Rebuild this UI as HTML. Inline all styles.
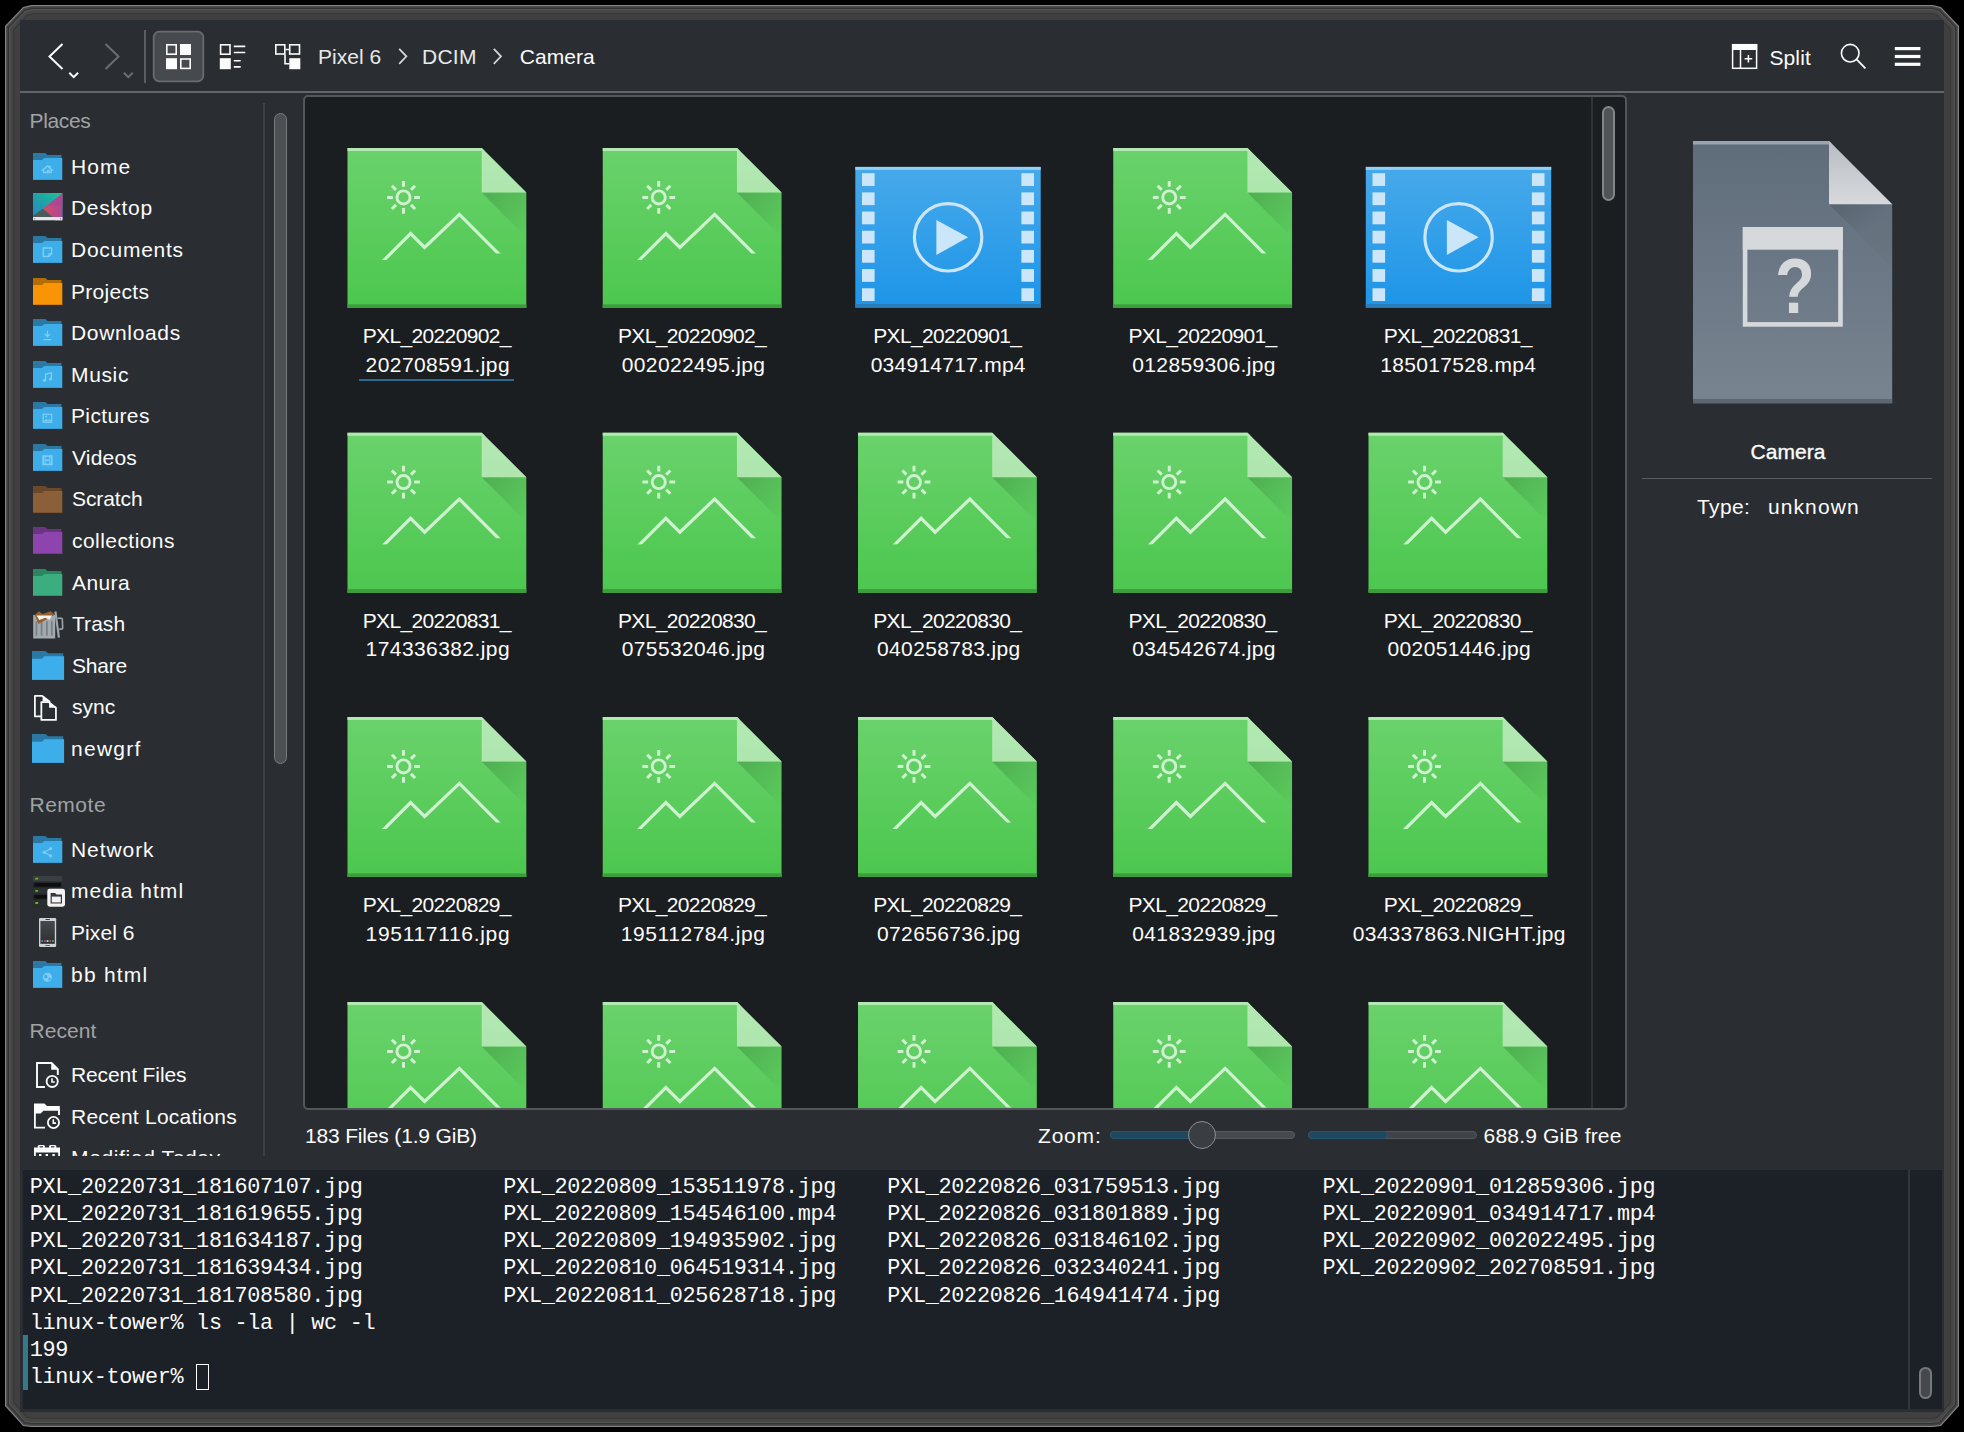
<!DOCTYPE html>
<html lang="en"><head><meta charset="utf-8"><title>Camera — Dolphin</title>
<style>
html,body{margin:0;padding:0;background:#000;}
body{width:1964px;height:1432px;position:relative;overflow:hidden;font-family:"Liberation Sans",sans-serif;}
.t{position:absolute;white-space:pre;font-family:"Liberation Sans",sans-serif;}
.i{position:absolute;display:block;overflow:visible}
.abs{position:absolute}
#shadow{position:absolute;left:0;top:0;width:1964px;height:1432px;}
#win{position:absolute;left:20px;top:20px;width:1924px;height:1392px;background:#2a2e32;}
#tbline{position:absolute;left:20px;top:91px;width:1924px;height:2px;background:#62666a;}
#view{position:absolute;left:303px;top:95px;width:1319.5px;height:1011px;border:2px solid #54575a;border-radius:5px;background:#1b1e20;overflow:hidden;}
#term{position:absolute;left:23px;top:1170px;width:1919px;height:239px;background:#1c2027;overflow:hidden;}
.sb{position:absolute;box-sizing:border-box;border-radius:7px;}
pre{margin:0}
</style></head><body>
<svg id="shadow" width="1964" height="1432" viewBox="0 0 1964 1432"><polygon points="5.0,26.0 23.1,7.1 31.2,5.0 1932.8,5.0 1940.9,7.1 1959.0,26.0 1959.0,1406.0 1940.9,1426.0 1932.8,1427.0 31.2,1427.0 23.1,1426.0 5.0,1406.0" fill="#868686"/><polygon points="6.1,26.5 23.6,8.1 31.5,6.1 1932.5,6.1 1940.4,8.1 1957.9,26.5 1957.9,1405.5 1940.4,1424.9 1932.5,1425.9 31.5,1425.9 23.6,1424.9 6.1,1405.5" fill="#4b4b4b"/><polygon points="7.1,26.9 24.1,9.1 31.8,7.1 1932.2,7.1 1939.9,9.1 1956.9,26.9 1956.9,1405.1 1939.9,1423.9 1932.2,1424.9 31.8,1424.9 24.1,1423.9 7.1,1405.1" fill="#424242"/><polygon points="8.0,27.2 24.5,9.9 32.1,8.0 1931.9,8.0 1939.5,9.9 1956.0,27.2 1956.0,1404.8 1939.5,1423.0 1931.9,1424.0 32.1,1424.0 24.5,1423.0 8.0,1404.8" fill="#333333"/><polygon points="9.1,27.7 25.1,11.0 32.3,9.1 1931.7,9.1 1938.9,11.0 1954.9,27.7 1954.9,1404.3 1938.9,1422.0 1931.7,1422.9 32.3,1422.9 25.1,1422.0 9.1,1404.3" fill="#565656"/><polygon points="10.1,28.1 25.6,11.9 32.6,10.1 1931.4,10.1 1938.4,11.9 1953.9,28.1 1953.9,1403.9 1938.4,1421.0 1931.4,1421.9 32.6,1421.9 25.6,1421.0 10.1,1403.9" fill="#464646"/><polygon points="12.9,29.3 27.0,14.5 33.4,12.9 1930.6,12.9 1937.0,14.5 1951.1,29.3 1951.1,1402.7 1937.0,1418.3 1930.6,1419.1 33.4,1419.1 27.0,1418.3 12.9,1402.7" fill="#383838"/><polygon points="14.1,29.8 27.6,15.7 33.7,14.1 1930.3,14.1 1936.4,15.7 1949.9,29.8 1949.9,1402.2 1936.4,1417.1 1930.3,1417.9 33.7,1417.9 27.6,1417.1 14.1,1402.2" fill="#404040"/></svg>
<div id="win"></div>
<div id="tbline"></div>
<svg class="i" style="left:0;top:0" width="1964" height="95" viewBox="0 0 1964 95"><path d="M62.5 44L49.5 56.5L62.5 69" fill="none" stroke="#fcfcfc" stroke-width="2"/><path d="M69.3 72.8L73.7 77.2L78.1 72.8" fill="none" stroke="#fcfcfc" stroke-width="2"/><path d="M105.5 44L118.5 56.5L105.5 69" fill="none" stroke="#6b6e71" stroke-width="2"/><path d="M123.9 72.8L128.3 77.2L132.7 72.8" fill="none" stroke="#6b6e71" stroke-width="2"/><rect x="144" y="30" width="2" height="53" fill="#5b5e61"/><rect x="153.7" y="31.7" width="49.6" height="49.6" rx="5.5" fill="#46494d" stroke="#696c6f" stroke-width="1.8"/><rect x="166.8" y="44.8" width="9.4" height="9.4" fill="none" stroke="#fcfcfc" stroke-width="1.6"/><rect x="180" y="44" width="11" height="11" fill="#fcfcfc"/><rect x="166" y="58.2" width="11" height="11" fill="#fcfcfc"/><rect x="180.8" y="59" width="9.4" height="9.4" fill="none" stroke="#fcfcfc" stroke-width="1.6"/><rect x="220.6" y="44.8" width="9.4" height="9.4" fill="none" stroke="#fcfcfc" stroke-width="1.6"/><rect x="219.8" y="58.2" width="11" height="11" fill="#fcfcfc"/><path d="M233.8 46.4H245.3M233.8 52.5H245.3M233.8 60.8H240.7M233.8 66.9H240.7" stroke="#fcfcfc" stroke-width="1.6"/><rect x="275.8" y="44.8" width="9" height="9.2" fill="none" stroke="#fcfcfc" stroke-width="1.6"/><rect x="289.7" y="44.8" width="9.8" height="9.2" fill="none" stroke="#fcfcfc" stroke-width="1.6"/><path d="M285.4 49.5H289.2M285 54.6V63.8H289.5" fill="none" stroke="#fcfcfc" stroke-width="1.6"/><rect x="289.3" y="58.2" width="11" height="11" fill="#fcfcfc"/><path d="M399.2 48.8L406.4 56.3L399.2 63.8" fill="none" stroke="#d8d9da" stroke-width="1.7"/><path d="M493.8 48.8L501 56.3L493.8 63.8" fill="none" stroke="#d8d9da" stroke-width="1.7"/><rect x="1732.6" y="44.7" width="24" height="23.6" fill="none" stroke="#fcfcfc" stroke-width="1.5"/><rect x="1732" y="44" width="25.2" height="6" fill="#fcfcfc"/><path d="M1740.5 50V68.6" stroke="#fcfcfc" stroke-width="1.5"/><path d="M1744.6 58.7H1752.2M1748.4 54.9V62.5" stroke="#fcfcfc" stroke-width="1.5"/><circle cx="1850.2" cy="53.2" r="8.8" fill="none" stroke="#fcfcfc" stroke-width="1.6"/><path d="M1856.6 59.4L1865.4 68.4" stroke="#fcfcfc" stroke-width="1.8"/><rect x="1894.8" y="47" width="25.6" height="3.2" fill="#fcfcfc"/><rect x="1894.8" y="54.9" width="25.6" height="3.2" fill="#fcfcfc"/><rect x="1894.8" y="62.7" width="25.6" height="3.2" fill="#fcfcfc"/></svg>
<div class="t" style="left:318.00px;top:42.22px;font-size:21.0px;line-height:29px;color:#e8e9e9;letter-spacing:0.041px;">Pixel 6</div>
<div class="t" style="left:422.00px;top:42.22px;font-size:21.0px;line-height:29px;color:#e8e9e9;letter-spacing:0.245px;">DCIM</div>
<div class="t" style="left:519.70px;top:42.22px;font-size:21.0px;line-height:29px;color:#fcfcfc;letter-spacing:0.058px;">Camera</div>
<div class="t" style="left:1769.40px;top:42.62px;font-size:21.0px;line-height:29px;color:#fcfcfc;letter-spacing:0.146px;">Split</div>
<div class="abs" style="left:263px;top:103px;width:1.5px;height:1053px;background:#3e4245"></div>
<div class="sb" style="left:274.1px;top:112.8px;width:13px;height:651.4px;background:#4c5053;border:1.7px solid #787b7e"></div>
<div class="abs" id="side" style="left:20px;top:93px;width:243px;height:1063px;overflow:hidden">
<div class="t" style="left:9.50px;top:13.32px;font-size:21.0px;line-height:29px;color:#a1a3a5;letter-spacing:-0.366px;">Places</div>
<div class="t" style="left:9.50px;top:696.82px;font-size:21.0px;line-height:29px;color:#a1a3a5;letter-spacing:0.510px;">Remote</div>
<div class="t" style="left:9.50px;top:922.82px;font-size:21.0px;line-height:29px;color:#a1a3a5;letter-spacing:0.039px;">Recent</div>
<div class="t" style="left:51.00px;top:58.82px;font-size:21.0px;line-height:29px;color:#fcfcfc;letter-spacing:1.021px;">Home</div>
<svg class="i" style="left:12.90px;top:60.00px" width="29.30" height="26.70" viewBox="0 0 29.30 26.70" ><g transform="scale(1.0000 0.9963)"><path d="M0 0H12.2L14.7 2H28.5V26H0Z" fill="#2a78a3"/><path d="M0 7.1H8.9L11.4 5H29.3V26.8H0Z" fill="#3daee9"/><rect x="0" y="26.1" width="29.3" height=".7" fill="#3aa6df"/><g transform="translate(14.45 16.3) scale(0.8) translate(-14.0 -13.45)"><path d="M9.3 17.6v-3.4l-1 .1 5.7-5 2 1.7v-1h1.2v2.1l2.5 2.2-1-.1v3.4h-2.6v-2.7h-2v2.7z" fill="none" stroke="#80cdf3" stroke-width="1.7"/></g></g></svg>
<div class="t" style="left:51.00px;top:100.42px;font-size:21.0px;line-height:29px;color:#fcfcfc;letter-spacing:0.674px;">Desktop</div>
<svg class="i" style="left:12.70px;top:100.40px" width="29.40" height="27.30" viewBox="0 0 29.40 27.30" ><defs><linearGradient id="dk1" x1="0" y1="1" x2="1" y2="0"><stop offset="0" stop-color="#2a84c6"/><stop offset=".5" stop-color="#1fa3a8"/><stop offset="1" stop-color="#19c596"/></linearGradient><linearGradient id="dk2" x1="0" y1="0" x2="1" y2="0"><stop offset="0" stop-color="#d84c62"/><stop offset="1" stop-color="#a9479a"/></linearGradient></defs><rect width="29.4" height="24.2" fill="url(#dk1)"/><path d="M29.4 0.5L9.9 15.7L20.1 24.2H29.4Z" fill="url(#dk2)"/><path d="M29.4 0.5L29.4 13L14 12.5Z" fill="#ab4791" opacity=".85"/><path d="M0 22.7L9.9 15.7L20.1 24.2H0Z" fill="#4b5a5b"/><rect y="24" width="29.4" height="3.3" fill="#e3e7e7"/><rect x="22" y="24" width="7.4" height="3.3" fill="#f1dfeb" opacity=".7"/><rect x="1.2" y="25.2" width="1.1" height="1.1" fill="#777"/><rect x="27" y="25.2" width="1.1" height="1.1" fill="#777"/></svg>
<div class="t" style="left:51.00px;top:141.92px;font-size:21.0px;line-height:29px;color:#fcfcfc;letter-spacing:0.736px;">Documents</div>
<svg class="i" style="left:12.90px;top:143.10px" width="29.30" height="26.70" viewBox="0 0 29.30 26.70" ><g transform="scale(1.0000 0.9963)"><path d="M0 0H12.2L14.7 2H28.5V26H0Z" fill="#2a78a3"/><path d="M0 7.1H8.9L11.4 5H29.3V26.8H0Z" fill="#3daee9"/><rect x="0" y="26.1" width="29.3" height=".7" fill="#3aa6df"/><g transform="translate(14.45 16.3) scale(1.1) translate(-14.4 -14.7)"><path d="M10.6 10.8h7.6v5.2l-2.6 2.6h-5z" fill="none" stroke="#80cdf3" stroke-width="1.3" stroke-linejoin="round"/><path d="M18 16.2h-2.4v2.4" fill="none" stroke="#80cdf3" stroke-width="1"/></g></g></svg>
<div class="t" style="left:51.00px;top:183.52px;font-size:21.0px;line-height:29px;color:#fcfcfc;letter-spacing:0.306px;">Projects</div>
<svg class="i" style="left:12.90px;top:184.70px" width="29.30" height="26.70" viewBox="0 0 29.30 26.70" ><g transform="scale(1.0000 0.9963)"><path d="M0 0H12.2L14.7 2H28.5V26H0Z" fill="#b56c04"/><path d="M0 7.1H8.9L11.4 5H29.3V26.8H0Z" fill="#f89406"/><rect x="0" y="26.1" width="29.3" height=".7" fill="#d98205"/></g></svg>
<div class="t" style="left:51.00px;top:225.12px;font-size:21.0px;line-height:29px;color:#fcfcfc;letter-spacing:0.663px;">Downloads</div>
<svg class="i" style="left:12.90px;top:226.30px" width="29.30" height="26.70" viewBox="0 0 29.30 26.70" ><g transform="scale(1.0000 0.9963)"><path d="M0 0H12.2L14.7 2H28.5V26H0Z" fill="#2a78a3"/><path d="M0 7.1H8.9L11.4 5H29.3V26.8H0Z" fill="#3daee9"/><rect x="0" y="26.1" width="29.3" height=".7" fill="#3aa6df"/><g transform="translate(14.45 16.3) scale(1.05) translate(-14.3 -14.2)"><path d="M14.3 10v5M11.8 13l2.5 2.6 2.5-2.6M10.6 18.4h7.4" fill="none" stroke="#80cdf3" stroke-width="1.2"/></g></g></svg>
<div class="t" style="left:51.00px;top:266.72px;font-size:21.0px;line-height:29px;color:#fcfcfc;letter-spacing:0.641px;">Music</div>
<svg class="i" style="left:12.90px;top:267.90px" width="29.30" height="26.70" viewBox="0 0 29.30 26.70" ><g transform="scale(1.0000 0.9963)"><path d="M0 0H12.2L14.7 2H28.5V26H0Z" fill="#2a78a3"/><path d="M0 7.1H8.9L11.4 5H29.3V26.8H0Z" fill="#3daee9"/><rect x="0" y="26.1" width="29.3" height=".7" fill="#3aa6df"/><g transform="translate(14.45 16.3) scale(1.05) translate(-14.2 -14.6)"><path d="M12.4 17.6v-6l5.6-1.2v6" fill="none" stroke="#80cdf3" stroke-width="1.3"/><circle cx="11.4" cy="17.6" r="1.5" fill="#80cdf3"/><circle cx="17" cy="16.4" r="1.5" fill="#80cdf3"/></g></g></svg>
<div class="t" style="left:51.00px;top:308.22px;font-size:21.0px;line-height:29px;color:#fcfcfc;letter-spacing:0.363px;">Pictures</div>
<svg class="i" style="left:12.90px;top:309.40px" width="29.30" height="26.70" viewBox="0 0 29.30 26.70" ><g transform="scale(1.0000 0.9963)"><path d="M0 0H12.2L14.7 2H28.5V26H0Z" fill="#2a78a3"/><path d="M0 7.1H8.9L11.4 5H29.3V26.8H0Z" fill="#3daee9"/><rect x="0" y="26.1" width="29.3" height=".7" fill="#3aa6df"/><g transform="translate(14.45 16.3) scale(1.05) translate(-14.4 -14.4)"><rect x="10.4" y="10.6" width="8" height="7.6" fill="none" stroke="#80cdf3" stroke-width="1.2"/><path d="M10.8 17.6l2.4-2.6 1.8 1.6 1.6-1.4 1.6 2.2z" fill="#80cdf3"/><circle cx="13" cy="12.8" r=".9" fill="#80cdf3"/></g></g></svg>
<div class="t" style="left:52.00px;top:349.82px;font-size:21.0px;line-height:29px;color:#fcfcfc;letter-spacing:0.194px;">Videos</div>
<svg class="i" style="left:12.90px;top:351.00px" width="29.30" height="26.70" viewBox="0 0 29.30 26.70" ><g transform="scale(1.0000 0.9963)"><path d="M0 0H12.2L14.7 2H28.5V26H0Z" fill="#2a78a3"/><path d="M0 7.1H8.9L11.4 5H29.3V26.8H0Z" fill="#3daee9"/><rect x="0" y="26.1" width="29.3" height=".7" fill="#3aa6df"/><g transform="translate(14.45 16.3) scale(1.05) translate(-14.5 -14.4)"><rect x="10.4" y="10.4" width="8.2" height="8" fill="none" stroke="#80cdf3" stroke-width="1.6"/><path d="M12.4 14.4h4.2" stroke="#80cdf3" stroke-width="1.5"/><path d="M12.3 10.4v8M16.7 10.4v8" stroke="#80cdf3" stroke-width="1"/></g></g></svg>
<div class="t" style="left:52.00px;top:391.42px;font-size:21.0px;line-height:29px;color:#fcfcfc;letter-spacing:-0.086px;">Scratch</div>
<svg class="i" style="left:12.90px;top:392.60px" width="29.30" height="26.70" viewBox="0 0 29.30 26.70" ><g transform="scale(1.0000 0.9963)"><path d="M0 0H12.2L14.7 2H28.5V26H0Z" fill="#6a4829"/><path d="M0 7.1H8.9L11.4 5H29.3V26.8H0Z" fill="#8b6039"/><rect x="0" y="26.1" width="29.3" height=".7" fill="#7a5431"/></g></svg>
<div class="t" style="left:52.00px;top:432.92px;font-size:21.0px;line-height:29px;color:#fcfcfc;letter-spacing:0.445px;">collections</div>
<svg class="i" style="left:12.90px;top:434.10px" width="29.30" height="26.70" viewBox="0 0 29.30 26.70" ><g transform="scale(1.0000 0.9963)"><path d="M0 0H12.2L14.7 2H28.5V26H0Z" fill="#6a3383"/><path d="M0 7.1H8.9L11.4 5H29.3V26.8H0Z" fill="#8e44ad"/><rect x="0" y="26.1" width="29.3" height=".7" fill="#7c3b98"/></g></svg>
<div class="t" style="left:52.00px;top:474.52px;font-size:21.0px;line-height:29px;color:#fcfcfc;letter-spacing:0.410px;">Anura</div>
<svg class="i" style="left:12.90px;top:475.70px" width="29.30" height="26.70" viewBox="0 0 29.30 26.70" ><g transform="scale(1.0000 0.9963)"><path d="M0 0H12.2L14.7 2H28.5V26H0Z" fill="#2b8560"/><path d="M0 7.1H8.9L11.4 5H29.3V26.8H0Z" fill="#3bad7e"/><rect x="0" y="26.1" width="29.3" height=".7" fill="#33986e"/></g></svg>
<div class="t" style="left:52.00px;top:516.12px;font-size:21.0px;line-height:29px;color:#fcfcfc;letter-spacing:0.045px;">Trash</div>
<svg class="i" style="left:13.20px;top:517.60px" width="30.40" height="27.80" viewBox="0 0 30.40 27.80" ><path d="M0.2 4H22.2V27.5H0.2Z" fill="#a2aab0"/><path d="M3.45 10.2V24.8M8.6 10.2V24.8M13.85 10.2V24.8M18.85 10.2V24.8" stroke="#787f85" stroke-width="1.7"/><path d="M22.4 0.5L25.9 26.6" stroke="#9da5ab" stroke-width="2.2"/><path d="M24.7 7.2H28.6Q29.2 7.2 29.3 8L29.7 17Q29.7 17.8 29 17.9L26.2 18.4" fill="none" stroke="#9da5ab" stroke-width="1.6"/><path d="M1.8 4L5.9 0.2L9.5 3.1L17.7 0.2L21.8 3.7L5.4 13.1Z" fill="#94622f"/><path d="M3.6 4.6H19.1L16.5 8.7L12.4 6.7L6.2 9Z" fill="#f6f2ee"/></svg>
<div class="t" style="left:52.00px;top:557.62px;font-size:21.0px;line-height:29px;color:#fcfcfc;letter-spacing:-0.215px;">Share</div>
<svg class="i" style="left:11.50px;top:557.60px" width="32.10" height="28.80" viewBox="0 0 32.10 28.80" ><g transform="scale(1.0956 1.0746)"><path d="M0 0H12.2L14.7 2H28.5V26H0Z" fill="#2a78a3"/><path d="M0 7.1H8.9L11.4 5H29.3V26.8H0Z" fill="#3daee9"/><rect x="0" y="26.1" width="29.3" height=".7" fill="#3aa6df"/></g></svg>
<div class="t" style="left:52.00px;top:599.22px;font-size:21.0px;line-height:29px;color:#fcfcfc;letter-spacing:0.007px;">sync</div>
<svg class="i" style="left:14.45px;top:601.50px" width="23.20" height="26.00" viewBox="0 0 23.20 26.00" ><g><path d="M0.9 0.9H8.2L15.5 6.5V21.400000000000002H0.9Z" fill="#2a2e32" stroke="#fcfcfc" stroke-width="1.75" stroke-linejoin="round"/><path d="M8.6 0.6L15.9 6.6H8.6Z" fill="#fcfcfc"/></g><g transform="translate(6.45 6.2)"><path d="M0.9 0.9H8.2L15.5 6.5V18.75H0.9Z" fill="#2a2e32" stroke="#fcfcfc" stroke-width="1.75" stroke-linejoin="round"/><path d="M8.6 0.6L15.9 6.6H8.6Z" fill="#fcfcfc"/></g></svg>
<div class="t" style="left:51.00px;top:640.82px;font-size:21.0px;line-height:29px;color:#fcfcfc;letter-spacing:1.261px;">newgrf</div>
<svg class="i" style="left:11.50px;top:640.80px" width="32.10" height="28.80" viewBox="0 0 32.10 28.80" ><g transform="scale(1.0956 1.0746)"><path d="M0 0H12.2L14.7 2H28.5V26H0Z" fill="#2a78a3"/><path d="M0 7.1H8.9L11.4 5H29.3V26.8H0Z" fill="#3daee9"/><rect x="0" y="26.1" width="29.3" height=".7" fill="#3aa6df"/></g></svg>
<div class="t" style="left:51.00px;top:741.82px;font-size:21.0px;line-height:29px;color:#fcfcfc;letter-spacing:0.930px;">Network</div>
<svg class="i" style="left:12.90px;top:743.00px" width="29.30" height="26.70" viewBox="0 0 29.30 26.70" ><g transform="scale(1.0000 0.9963)"><path d="M0 0H12.2L14.7 2H28.5V26H0Z" fill="#2a78a3"/><path d="M0 7.1H8.9L11.4 5H29.3V26.8H0Z" fill="#3daee9"/><rect x="0" y="26.1" width="29.3" height=".7" fill="#3aa6df"/><g transform="translate(14.45 16.3) scale(1.1) translate(-14.6 -14.2)"><path d="M17.3 11l-5.6 3.2 5.6 3.2" fill="none" stroke="#80cdf3" stroke-width="1"/><circle cx="17.5" cy="10.9" r="1.4" fill="#80cdf3"/><circle cx="11.6" cy="14.2" r="1.4" fill="#80cdf3"/><circle cx="17.5" cy="17.5" r="1.4" fill="#80cdf3"/></g></g></svg>
<div class="t" style="left:51.00px;top:783.42px;font-size:21.0px;line-height:29px;color:#fcfcfc;letter-spacing:1.040px;">media html</div>
<svg class="i" style="left:13.00px;top:783.10px" width="32.50" height="31.00" viewBox="0 0 32.50 31.00" ><rect x="0" y="0" width="29" height="30.8" fill="#232527"/><rect x="0" y="0" width="29" height="5.6" fill="#3b3f41"/><rect x="1.4" y="7" width="26.4" height="3.6" fill="#0d0e0f"/><rect x="0" y="12" width="29" height="5.6" fill="#2c2f31"/><rect x="1.4" y="19" width="26.4" height="3.6" fill="#0d0e0f"/><rect x="0" y="24" width="29" height="6.8" fill="#2a2d2f"/><rect x="2.2" y="1.8" width="3" height="1.8" rx=".6" fill="#6fb41b"/><rect x="2.2" y="13.9" width="3" height="1.8" rx=".6" fill="#6fb41b"/><rect x="2.2" y="26.1" width="3" height="1.8" rx=".6" fill="#6fb41b"/><rect x="14.3" y="12.7" width="17.7" height="18" rx="2.4" fill="#f2f2f2"/><path d="M17.6 17H22L23.6 18.6H29V27.6H17.6Z" fill="#35383b"/><rect x="18.8" y="20.6" width="9" height="5.8" fill="#f2f2f2"/></svg>
<div class="t" style="left:51.00px;top:825.02px;font-size:21.0px;line-height:29px;color:#fcfcfc;letter-spacing:0.075px;">Pixel 6</div>
<svg class="i" style="left:18.90px;top:824.60px" width="17.20" height="29.00" viewBox="0 0 17.20 29.00" ><defs><linearGradient id="ph" x1="0" y1="0" x2="0" y2="1"><stop offset="0" stop-color="#474a4d"/><stop offset="1" stop-color="#2c2f31"/></linearGradient></defs><rect x="0" y="0" width="17.2" height="29" rx="1.2" fill="#cfd2d3"/><rect x="1.4" y="3" width="14.4" height="22.8" fill="url(#ph)"/><rect x="6.4" y="1.1" width="4.6" height="0.9" rx=".4" fill="#3a3d3f"/><rect x="6.4" y="26.9" width="4.6" height="0.9" rx=".4" fill="#3a3d3f"/><rect x="2.2" y="22.2" width="1.8" height="1.7" fill="#2f8fd0"/><rect x="4.9" y="22.2" width="1.8" height="1.7" fill="#d8457f"/><rect x="7.7" y="22.2" width="1.8" height="1.7" fill="#d8d8d8"/><rect x="10.4" y="22.2" width="1.8" height="1.7" fill="#d44b3a"/><rect x="13.1" y="22.2" width="1.8" height="1.7" fill="#2db866"/></svg>
<div class="t" style="left:51.00px;top:866.62px;font-size:21.0px;line-height:29px;color:#fcfcfc;letter-spacing:1.233px;">bb html</div>
<svg class="i" style="left:12.90px;top:867.80px" width="29.30" height="26.70" viewBox="0 0 29.30 26.70" ><g transform="scale(1.0000 0.9963)"><path d="M0 0H12.2L14.7 2H28.5V26H0Z" fill="#2a78a3"/><path d="M0 7.1H8.9L11.4 5H29.3V26.8H0Z" fill="#3daee9"/><rect x="0" y="26.1" width="29.3" height=".7" fill="#3aa6df"/><g transform="translate(14.45 16.3) scale(1.1) translate(-14.5 -14.6)"><circle cx="14.5" cy="14.6" r="4.1" fill="#80cdf3"/><path d="M12.2 12.2l2 .6.4 1.8-1.4 1.2-1.8-.8zM15.6 15l2 .2-.6 2-1.6.8z" fill="#3daee9"/></g></g></svg>
<div class="t" style="left:51.00px;top:966.92px;font-size:21.0px;line-height:29px;color:#fcfcfc;letter-spacing:-0.110px;">Recent Files</div>
<svg class="i" style="left:16.00px;top:969.40px" width="24.00" height="27.00" viewBox="0 0 24.00 27.00" ><path d="M9 25H1V1H15.6L21.8 7.2V13" fill="none" stroke="#fcfcfc" stroke-width="1.9"/><path d="M15.2 1.2L21.8 7.8H15.2Z" fill="#fcfcfc"/><circle cx="16.2" cy="19.4" r="7.199999999999999" fill="#2a2e32"/><circle cx="16.2" cy="19.4" r="5.6" fill="none" stroke="#fcfcfc" stroke-width="1.8"/><path d="M16.0 16.2V20.0H18.8" fill="none" stroke="#fcfcfc" stroke-width="1.6"/></svg>
<div class="t" style="left:51.00px;top:1008.52px;font-size:21.0px;line-height:29px;color:#fcfcfc;letter-spacing:0.229px;">Recent Locations</div>
<svg class="i" style="left:14.40px;top:1010.40px" width="26.40" height="26.40" viewBox="0 0 26.40 26.40" ><path d="M0 0.4H10.4L13 3H25.8V12H24V7.8H9.4L6.6 10.6H0Z" fill="#fcfcfc"/><path d="M11 24.6H0.9V8" fill="none" stroke="#fcfcfc" stroke-width="1.8"/><path d="M24.9 6V12" fill="none" stroke="#fcfcfc" stroke-width="1.8"/><circle cx="19.5" cy="19.5" r="7.199999999999999" fill="#2a2e32"/><circle cx="19.5" cy="19.5" r="5.6" fill="none" stroke="#fcfcfc" stroke-width="1.8"/><path d="M19.3 16.3V20.1H22.1" fill="none" stroke="#fcfcfc" stroke-width="1.6"/></svg>
<div class="t" style="left:51.00px;top:1050.12px;font-size:21.0px;line-height:29px;color:#fcfcfc;letter-spacing:0.635px;">Modified Today</div>
<svg class="i" style="left:14.40px;top:1052.20px" width="26.40" height="12.00" viewBox="0 0 26.40 12.00" ><path d="M0 2.6H26V12H24.2V7.4H1.8V12H0Z" fill="#fcfcfc"/><rect x="3.6" y="0" width="7.4" height="3.4" rx="1.6" fill="#fcfcfc"/><rect x="15" y="0" width="7.4" height="3.4" rx="1.6" fill="#fcfcfc"/><rect x="5.6" y="1.2" width="3.4" height="1.2" fill="#2a2e32"/><rect x="17" y="1.2" width="3.4" height="1.2" fill="#2a2e32"/><rect x="5" y="9" width="2.4" height="2.4" fill="#fcfcfc"/><rect x="11.6" y="9" width="2.4" height="2.4" fill="#fcfcfc"/><rect x="18.4" y="9" width="2.4" height="2.4" fill="#fcfcfc"/></svg>
</div>
<div id="view">
<svg class="i" style="left:0;top:0" width="1320" height="1011" viewBox="0 0 1320 1011"><defs>
<linearGradient id="gG" x1="0" y1="0" x2="0" y2="1"><stop offset="0" stop-color="#6ad26c"/><stop offset="1" stop-color="#4cc74e"/></linearGradient>
<linearGradient id="gS" x1="0" y1="0" x2="1" y2="1"><stop offset="0" stop-color="#0a3a0c" stop-opacity=".22"/><stop offset="1" stop-color="#0a3a0c" stop-opacity="0"/></linearGradient>
<linearGradient id="gF" x1="0" y1="0" x2="0" y2="1"><stop offset="0" stop-color="#b4e8b3"/><stop offset="1" stop-color="#aee6ae"/></linearGradient>
<linearGradient id="gB" x1="0" y1="0" x2="0" y2="1"><stop offset="0" stop-color="#47a9ea"/><stop offset="1" stop-color="#1d95e8"/></linearGradient>
<clipPath id="mc"><rect x="0" y="0" width="100" height="111.9"/><rect x="100" y="0" width="80" height="105.5"/></clipPath>
<g id="img">
<path d="M0 0H134.2L178.8 44.6V160H0Z" fill="url(#gG)"/>
<path d="M0 0H134.2L137.2 3H0Z" fill="#b4e8b2"/>
<rect x="0" y="156.4" width="178.8" height="3.6" fill="#3e9c3f"/>
<path d="M134.2 44.6H178.8V89.2Z" fill="url(#gS)"/>
<path d="M134.2 0L178.8 44.6H134.2Z" fill="url(#gF)"/>
<g fill="none" stroke="#d5f2d6" stroke-opacity=".95">
<circle cx="56.0" cy="49.4" r="6.55" stroke-width="2.9"/>
<path d="M66.6 49.4L72.4 49.4M63.5 56.9L67.6 61.0M56.0 60.0L56.0 65.8M48.5 56.9L44.4 61.0M45.4 49.4L39.6 49.4M48.5 41.9L44.4 37.8M56.0 38.8L56.0 33.0M63.5 41.9L67.6 37.8" stroke-width="3"/>
<path clip-path="url(#mc)" d="M30 118.7L63.1 85.6L77.1 99.5L111.9 66.4L157.6 112.3" stroke-width="3.2"/>
</g></g>
<g id="vid">
<rect x="0" y="0" width="185.4" height="140.8" fill="url(#gB)"/>
<rect x="0" y="0" width="185.4" height="3" fill="#94d0f4"/>
<rect x="0" y="137.1" width="185.4" height="3.7" fill="#2a7dbb"/>
<g fill="#cbe6f9"><rect x="6.7" y="6.30" width="12.6" height="12.75"/><rect x="166.1" y="6.30" width="12.6" height="12.75"/><rect x="6.7" y="25.48" width="12.6" height="12.75"/><rect x="166.1" y="25.48" width="12.6" height="12.75"/><rect x="6.7" y="44.66" width="12.6" height="12.75"/><rect x="166.1" y="44.66" width="12.6" height="12.75"/><rect x="6.7" y="63.84" width="12.6" height="12.75"/><rect x="166.1" y="63.84" width="12.6" height="12.75"/><rect x="6.7" y="83.02" width="12.6" height="12.75"/><rect x="166.1" y="83.02" width="12.6" height="12.75"/><rect x="6.7" y="102.20" width="12.6" height="12.75"/><rect x="166.1" y="102.20" width="12.6" height="12.75"/><rect x="6.7" y="121.38" width="12.6" height="12.75"/><rect x="166.1" y="121.38" width="12.6" height="12.75"/></g>
<circle cx="92.8" cy="70.4" r="33.7" fill="none" stroke="#cbe6f9" stroke-width="3.2"/>
<path d="M81.1 53.2V88L112.8 70.4Z" fill="#cbe6f9"/>
</g></defs><use href="#img" x="42.50" y="51.00"/><use href="#img" x="297.75" y="51.00"/><use href="#vid" x="550.30" y="69.90"/><use href="#img" x="808.25" y="51.00"/><use href="#vid" x="1060.80" y="69.90"/><use href="#img" x="42.50" y="335.70"/><use href="#img" x="297.75" y="335.70"/><use href="#img" x="553.00" y="335.70"/><use href="#img" x="808.25" y="335.70"/><use href="#img" x="1063.50" y="335.70"/><use href="#img" x="42.50" y="620.00"/><use href="#img" x="297.75" y="620.00"/><use href="#img" x="553.00" y="620.00"/><use href="#img" x="808.25" y="620.00"/><use href="#img" x="1063.50" y="620.00"/><use href="#img" x="42.50" y="905.00"/><use href="#img" x="297.75" y="905.00"/><use href="#img" x="553.00" y="905.00"/><use href="#img" x="808.25" y="905.00"/><use href="#img" x="1063.50" y="905.00"/></svg>
<div class="t" style="left:57.75px;top:224.02px;font-size:21.0px;line-height:29px;color:#fcfcfc;letter-spacing:-0.650px;">PXL_20220902_</div>
<div class="t" style="left:60.60px;top:252.62px;font-size:21.0px;line-height:29px;color:#fcfcfc;letter-spacing:0.417px;">202708591.jpg</div>
<div class="t" style="left:313.00px;top:224.02px;font-size:21.0px;line-height:29px;color:#fcfcfc;letter-spacing:-0.650px;">PXL_20220902_</div>
<div class="t" style="left:316.85px;top:252.62px;font-size:21.0px;line-height:29px;color:#fcfcfc;letter-spacing:0.334px;">002022495.jpg</div>
<div class="t" style="left:568.25px;top:224.02px;font-size:21.0px;line-height:29px;color:#fcfcfc;letter-spacing:-0.650px;">PXL_20220901_</div>
<div class="t" style="left:565.65px;top:252.62px;font-size:21.0px;line-height:29px;color:#fcfcfc;letter-spacing:0.257px;">034914717.mp4</div>
<div class="t" style="left:823.50px;top:224.02px;font-size:21.0px;line-height:29px;color:#fcfcfc;letter-spacing:-0.650px;">PXL_20220901_</div>
<div class="t" style="left:827.35px;top:252.62px;font-size:21.0px;line-height:29px;color:#fcfcfc;letter-spacing:0.334px;">012859306.jpg</div>
<div class="t" style="left:1078.75px;top:224.02px;font-size:21.0px;line-height:29px;color:#fcfcfc;letter-spacing:-0.650px;">PXL_20220831_</div>
<div class="t" style="left:1075.15px;top:252.62px;font-size:21.0px;line-height:29px;color:#fcfcfc;letter-spacing:0.340px;">185017528.mp4</div>
<div class="t" style="left:57.75px;top:508.72px;font-size:21.0px;line-height:29px;color:#fcfcfc;letter-spacing:-0.650px;">PXL_20220831_</div>
<div class="t" style="left:60.60px;top:537.32px;font-size:21.0px;line-height:29px;color:#fcfcfc;letter-spacing:0.417px;">174336382.jpg</div>
<div class="t" style="left:313.00px;top:508.72px;font-size:21.0px;line-height:29px;color:#fcfcfc;letter-spacing:-0.650px;">PXL_20220830_</div>
<div class="t" style="left:316.85px;top:537.32px;font-size:21.0px;line-height:29px;color:#fcfcfc;letter-spacing:0.334px;">075532046.jpg</div>
<div class="t" style="left:568.25px;top:508.72px;font-size:21.0px;line-height:29px;color:#fcfcfc;letter-spacing:-0.650px;">PXL_20220830_</div>
<div class="t" style="left:572.10px;top:537.32px;font-size:21.0px;line-height:29px;color:#fcfcfc;letter-spacing:0.334px;">040258783.jpg</div>
<div class="t" style="left:823.50px;top:508.72px;font-size:21.0px;line-height:29px;color:#fcfcfc;letter-spacing:-0.650px;">PXL_20220830_</div>
<div class="t" style="left:827.35px;top:537.32px;font-size:21.0px;line-height:29px;color:#fcfcfc;letter-spacing:0.334px;">034542674.jpg</div>
<div class="t" style="left:1078.75px;top:508.72px;font-size:21.0px;line-height:29px;color:#fcfcfc;letter-spacing:-0.650px;">PXL_20220830_</div>
<div class="t" style="left:1082.60px;top:537.32px;font-size:21.0px;line-height:29px;color:#fcfcfc;letter-spacing:0.334px;">002051446.jpg</div>
<div class="t" style="left:57.75px;top:793.02px;font-size:21.0px;line-height:29px;color:#fcfcfc;letter-spacing:-0.650px;">PXL_20220829_</div>
<div class="t" style="left:60.60px;top:821.62px;font-size:21.0px;line-height:29px;color:#fcfcfc;letter-spacing:0.677px;">195117116.jpg</div>
<div class="t" style="left:313.00px;top:793.02px;font-size:21.0px;line-height:29px;color:#fcfcfc;letter-spacing:-0.650px;">PXL_20220829_</div>
<div class="t" style="left:315.85px;top:821.62px;font-size:21.0px;line-height:29px;color:#fcfcfc;letter-spacing:0.547px;">195112784.jpg</div>
<div class="t" style="left:568.25px;top:793.02px;font-size:21.0px;line-height:29px;color:#fcfcfc;letter-spacing:-0.650px;">PXL_20220829_</div>
<div class="t" style="left:572.10px;top:821.62px;font-size:21.0px;line-height:29px;color:#fcfcfc;letter-spacing:0.334px;">072656736.jpg</div>
<div class="t" style="left:823.50px;top:793.02px;font-size:21.0px;line-height:29px;color:#fcfcfc;letter-spacing:-0.650px;">PXL_20220829_</div>
<div class="t" style="left:827.35px;top:821.62px;font-size:21.0px;line-height:29px;color:#fcfcfc;letter-spacing:0.334px;">041832939.jpg</div>
<div class="t" style="left:1078.75px;top:793.02px;font-size:21.0px;line-height:29px;color:#fcfcfc;letter-spacing:-0.650px;">PXL_20220829_</div>
<div class="t" style="left:1047.75px;top:821.62px;font-size:21.0px;line-height:29px;color:#fcfcfc;letter-spacing:0.271px;">034337863.NIGHT.jpg</div>
<div class="abs" style="left:54px;top:282.3px;width:154.7px;height:1.6px;background:#2c6a8f"></div>
<div class="abs" style="left:1286px;top:0;width:2px;height:1011px;background:#2f3336"></div>
<div class="sb" style="left:1297.2px;top:9px;width:13px;height:95px;background:#505457;border:2px solid #838587"></div>
</div>
<svg class="i" style="left:1692.70px;top:140.80px" width="199.20" height="262.20" viewBox="0 0 199.20 262.20" ><defs>
<linearGradient id="uG" x1="0" y1="0" x2="0" y2="1"><stop offset="0" stop-color="#5f6c7a"/><stop offset="1" stop-color="#788490"/></linearGradient>
<linearGradient id="uF" x1="0" y1="0" x2="0" y2="1"><stop offset="0" stop-color="#b8bdc3"/><stop offset="1" stop-color="#d7d9dc"/></linearGradient>
<linearGradient id="uS" x1="0" y1="0" x2="1" y2="1"><stop offset="0" stop-color="#000" stop-opacity=".13"/><stop offset=".5" stop-color="#000" stop-opacity=".02"/></linearGradient>
</defs>
<path d="M0 0H136L199.2 63.2V262.2H0Z" fill="url(#uG)"/>
<path d="M0 0H136L139.5 3.5H0Z" fill="#9ba5af"/>
<rect x="0" y="258" width="199.2" height="4.2" fill="#5c6773"/>
<path d="M136 63.2H199.2V126.4Z" fill="url(#uS)"/>
<path d="M136 0L199.2 63.2H136Z" fill="url(#uF)"/>
<rect x="52.1" y="88.4" width="95.4" height="95" fill="none" stroke="#d6d9dc" stroke-width="4.6"/>
<rect x="49.8" y="86.1" width="100" height="22.6" fill="#d6d9dc"/>
<text transform="translate(101.9 172) scale(.87 1.045)" x="0" y="0" font-family="Liberation Sans, sans-serif" font-weight="bold" font-size="75" text-anchor="middle" fill="#d6d9dc">?</text>
</svg>
<div class="t" style="left:1750.45px;top:437.42px;font-size:21.0px;line-height:29px;color:#fcfcfc;letter-spacing:0.058px;-webkit-text-stroke:.35px #fcfcfc;">Camera</div>
<div class="abs" style="left:1642px;top:478px;width:290px;height:1.3px;background:#5b5e61"></div>
<div class="t" style="left:1697.00px;top:492.12px;font-size:21.0px;line-height:29px;color:#fcfcfc;letter-spacing:0.368px;">Type:</div>
<div class="t" style="left:1767.90px;top:492.12px;font-size:21.0px;line-height:29px;color:#fcfcfc;letter-spacing:1.120px;">unknown</div>
<div class="t" style="left:305.00px;top:1121.32px;font-size:21.0px;line-height:29px;color:#fcfcfc;letter-spacing:-0.171px;">183 Files (1.9 GiB)</div>
<div class="t" style="left:1038.00px;top:1120.82px;font-size:21.0px;line-height:29px;color:#fcfcfc;letter-spacing:0.805px;">Zoom:</div>
<div class="t" style="left:1483.60px;top:1120.82px;font-size:21.0px;line-height:29px;color:#fcfcfc;letter-spacing:0.182px;">688.9 GiB free</div>
<div class="sb" style="left:1110px;top:1131px;width:185px;height:8.4px;border-radius:4.2px;background:#46494d;border:1px solid #585b5e"></div>
<div class="sb" style="left:1110px;top:1131px;width:95px;height:8.4px;border-radius:4.2px;background:#1f4860;border:1px solid #25566f"></div>
<div class="sb" style="left:1188.4px;top:1121px;width:28px;height:28px;border-radius:14px;background:#3a3d41;border:1.6px solid #8d8f91"></div>
<div class="sb" style="left:1308px;top:1131px;width:169px;height:8.4px;border-radius:4.2px;background:#404347;border:1px solid #55585b"></div>
<div class="sb" style="left:1308px;top:1131px;width:80px;height:8.4px;border-radius:4.2px;background:#1f4860;border:1px solid #25566f"></div>
<div id="term">
<div class="t m" style="left:6.70px;top:1.80px;font-size:21.8px;line-height:31px;color:#fcfcfc;letter-spacing:-0.280px;font-family:'Liberation Mono',monospace;">PXL_20220731_181607107.jpg</div>
<div class="t m" style="left:6.70px;top:28.99px;font-size:21.8px;line-height:31px;color:#fcfcfc;letter-spacing:-0.280px;font-family:'Liberation Mono',monospace;">PXL_20220731_181619655.jpg</div>
<div class="t m" style="left:6.70px;top:56.18px;font-size:21.8px;line-height:31px;color:#fcfcfc;letter-spacing:-0.280px;font-family:'Liberation Mono',monospace;">PXL_20220731_181634187.jpg</div>
<div class="t m" style="left:6.70px;top:83.37px;font-size:21.8px;line-height:31px;color:#fcfcfc;letter-spacing:-0.280px;font-family:'Liberation Mono',monospace;">PXL_20220731_181639434.jpg</div>
<div class="t m" style="left:6.70px;top:110.56px;font-size:21.8px;line-height:31px;color:#fcfcfc;letter-spacing:-0.280px;font-family:'Liberation Mono',monospace;">PXL_20220731_181708580.jpg</div>
<div class="t m" style="left:480.30px;top:1.80px;font-size:21.8px;line-height:31px;color:#fcfcfc;letter-spacing:-0.280px;font-family:'Liberation Mono',monospace;">PXL_20220809_153511978.jpg</div>
<div class="t m" style="left:480.30px;top:28.99px;font-size:21.8px;line-height:31px;color:#fcfcfc;letter-spacing:-0.280px;font-family:'Liberation Mono',monospace;">PXL_20220809_154546100.mp4</div>
<div class="t m" style="left:480.30px;top:56.18px;font-size:21.8px;line-height:31px;color:#fcfcfc;letter-spacing:-0.280px;font-family:'Liberation Mono',monospace;">PXL_20220809_194935902.jpg</div>
<div class="t m" style="left:480.30px;top:83.37px;font-size:21.8px;line-height:31px;color:#fcfcfc;letter-spacing:-0.280px;font-family:'Liberation Mono',monospace;">PXL_20220810_064519314.jpg</div>
<div class="t m" style="left:480.30px;top:110.56px;font-size:21.8px;line-height:31px;color:#fcfcfc;letter-spacing:-0.280px;font-family:'Liberation Mono',monospace;">PXL_20220811_025628718.jpg</div>
<div class="t m" style="left:864.30px;top:1.80px;font-size:21.8px;line-height:31px;color:#fcfcfc;letter-spacing:-0.280px;font-family:'Liberation Mono',monospace;">PXL_20220826_031759513.jpg</div>
<div class="t m" style="left:864.30px;top:28.99px;font-size:21.8px;line-height:31px;color:#fcfcfc;letter-spacing:-0.280px;font-family:'Liberation Mono',monospace;">PXL_20220826_031801889.jpg</div>
<div class="t m" style="left:864.30px;top:56.18px;font-size:21.8px;line-height:31px;color:#fcfcfc;letter-spacing:-0.280px;font-family:'Liberation Mono',monospace;">PXL_20220826_031846102.jpg</div>
<div class="t m" style="left:864.30px;top:83.37px;font-size:21.8px;line-height:31px;color:#fcfcfc;letter-spacing:-0.280px;font-family:'Liberation Mono',monospace;">PXL_20220826_032340241.jpg</div>
<div class="t m" style="left:864.30px;top:110.56px;font-size:21.8px;line-height:31px;color:#fcfcfc;letter-spacing:-0.280px;font-family:'Liberation Mono',monospace;">PXL_20220826_164941474.jpg</div>
<div class="t m" style="left:1299.50px;top:1.80px;font-size:21.8px;line-height:31px;color:#fcfcfc;letter-spacing:-0.280px;font-family:'Liberation Mono',monospace;">PXL_20220901_012859306.jpg</div>
<div class="t m" style="left:1299.50px;top:28.99px;font-size:21.8px;line-height:31px;color:#fcfcfc;letter-spacing:-0.280px;font-family:'Liberation Mono',monospace;">PXL_20220901_034914717.mp4</div>
<div class="t m" style="left:1299.50px;top:56.18px;font-size:21.8px;line-height:31px;color:#fcfcfc;letter-spacing:-0.280px;font-family:'Liberation Mono',monospace;">PXL_20220902_002022495.jpg</div>
<div class="t m" style="left:1299.50px;top:83.37px;font-size:21.8px;line-height:31px;color:#fcfcfc;letter-spacing:-0.280px;font-family:'Liberation Mono',monospace;">PXL_20220902_202708591.jpg</div>
<div class="t m" style="left:6.70px;top:137.75px;font-size:21.8px;line-height:31px;color:#fcfcfc;letter-spacing:-0.280px;font-family:'Liberation Mono',monospace;">linux-tower% ls -la | wc -l</div>
<div class="t m" style="left:6.70px;top:164.94px;font-size:21.8px;line-height:31px;color:#fcfcfc;letter-spacing:-0.280px;font-family:'Liberation Mono',monospace;">199</div>
<div class="t m" style="left:6.70px;top:192.13px;font-size:21.8px;line-height:31px;color:#fcfcfc;letter-spacing:-0.280px;font-family:'Liberation Mono',monospace;">linux-tower% </div>
<div class="abs" style="left:0;top:165.2px;width:5.2px;height:54.6px;background:#357a8a"></div>
<div class="abs" style="left:172.8px;top:193.6px;width:13.2px;height:26.2px;box-sizing:border-box;border:1.6px solid #fcfcfc"></div>
<div class="abs" style="left:1885px;top:0;width:2px;height:239px;background:#31353c"></div>
<div class="sb" style="left:1896.2px;top:197px;width:12.8px;height:32.4px;border-radius:6.4px;background:#45484c;border:2px solid #76787a"></div>
</div>
</body></html>
